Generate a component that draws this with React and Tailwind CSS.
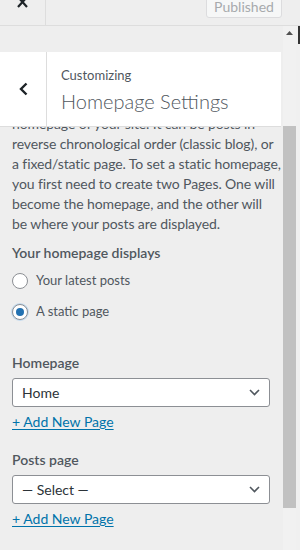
import { useState } from "react";

const font = { fontFamily: 'Lato, "Noto Sans", sans-serif' };

function Radio({ checked, label, onClick }) {
  return (
    <label onClick={onClick} className="flex items-center h-[20px] cursor-pointer">
      <span
        className={
          "w-[16px] h-[16px] rounded-full border bg-white flex items-center justify-center " +
          (checked ? "border-[#8c8f94] shadow-[0_0_0_1px_#c5dbed]" : "border-[#8c8f94]")
        }
      >
        {checked && <span className="w-[8px] h-[8px] rounded-full bg-[#2271b1]" />}
      </span>
      <span className="ml-[8px] text-[13px] text-[#50575e]">{label}</span>
    </label>
  );
}

function Select({ value }) {
  return (
    <div className="mt-[5px] h-[29px] w-[258px] rounded-[3px] border border-[#8c8f94] bg-white flex items-center pl-[9px] pr-[9px]">
      <span className="flex-1 text-[14px] text-[#2c3338]">{value}</span>
      <svg width="11" height="7" viewBox="0 0 11 7" fill="none">
        <polyline points="1,1 5.5,5.5 10,1" stroke="#50575e" strokeWidth="1.6" />
      </svg>
    </div>
  );
}

function AddLink() {
  return (
    <a className="block mt-[5px] leading-[20px] text-[14px] text-[#0073aa] underline underline-offset-2 w-fit">
      + Add New Page
    </a>
  );
}

export default function App() {
  const [shows, setShows] = useState("page");

  return (
    <div style={font} className="w-[300px] h-[550px] bg-[#eeeeee] flex flex-col overflow-hidden">
      {/* top bar */}
      <div className="h-[26px] shrink-0 flex border-b border-[#dddddd] overflow-hidden">
        <div className="w-[46px] h-full border-r border-[#dddddd] flex justify-center">
          <svg className="-mt-[4px]" width="11" height="12" viewBox="0 0 11 12">
            <path d="M1 1 L10 11 M10 1 L1 11" stroke="#1d2327" strokeWidth="2.2" />
          </svg>
        </div>
        <div className="ml-auto mr-[18px] -mt-[10px] h-[28px] w-[76px] rounded-[3px] border border-[#dcdcde] bg-[#f6f7f7] flex items-end justify-center pb-[2px]">
          <span className="text-[14px] text-[#a7aaad] leading-[16px]">Published</span>
        </div>
      </div>

      <div className="flex flex-1 min-h-0">
        {/* panel */}
        <div className="w-[281px] flex flex-col pt-[26px]">
          <div className="h-[75px] shrink-0 bg-white border-b border-[#dddddd] flex">
            <div className="w-[47px] border-r border-[#dddddd] flex items-center justify-center">
              <svg width="9" height="14" viewBox="0 0 9 14" fill="none">
                <polyline points="7.5,1.5 2,7 7.5,12.5" stroke="#1d2327" strokeWidth="2.4" />
              </svg>
            </div>
            <div className="pl-[14px] pt-[14px]">
              <div className="text-[13px] leading-[18px] text-[#50575e]">Customizing</div>
              <div className="mt-[3px] text-[20px] leading-[28px] font-light text-[#50575e]">
                Homepage Settings
              </div>
            </div>
          </div>

          <div className="flex-1 overflow-hidden">
            <div className="-mt-[33px] pl-[12px] pr-[11px]">
              <p className="text-[14px] leading-[20px] tracking-[-0.1px] text-[#50575e] whitespace-nowrap">
                You can choose what’s displayed on the
                <br />
                homepage of your site. It can be posts in
                <br />
                reverse chronological order (classic blog), or
                <br />
                a fixed/static page. To set a static homepage,
                <br />
                you first need to create two Pages. One will
                <br />
                become the homepage, and the other will
                <br />
                be where your posts are displayed.
              </p>

              <div className="mt-[9px] text-[14px] leading-[20px] font-semibold text-[#50575e]">
                Your homepage displays
              </div>
              <div className="mt-[8px] flex flex-col gap-[11px]">
                <Radio checked={shows === "posts"} label="Your latest posts" onClick={() => setShows("posts")} />
                <Radio checked={shows === "page"} label="A static page" onClick={() => setShows("page")} />
              </div>

              <div className="mt-[31px] text-[14px] leading-[20px] font-semibold text-[#50575e]">Homepage</div>
              <Select value="Home" />
              <AddLink />

              <div className="mt-[18px] text-[14px] leading-[20px] font-semibold text-[#50575e]">Posts page</div>
              <Select value="— Select —" />
              <AddLink />
            </div>
          </div>
        </div>

        {/* scrollbar */}
        <div className="ml-[2px] w-[13px] bg-[#f1f1f1] flex flex-col">
          <div className="h-[14px] flex items-center justify-center">
            <svg width="7" height="4" viewBox="0 0 7 4">
              <polygon points="0,4 3.5,0 7,4" fill="#505050" />
            </svg>
          </div>
          <div className="h-[86px]" />
          <div className="h-[382px] bg-[#c1c1c1]" />
        </div>
        <div className="w-[4px] bg-[#f0f0f0] flex justify-end">
          <div className="w-[2px] h-[18px] bg-[#333]" />
        </div>
      </div>
    </div>
  );
}
